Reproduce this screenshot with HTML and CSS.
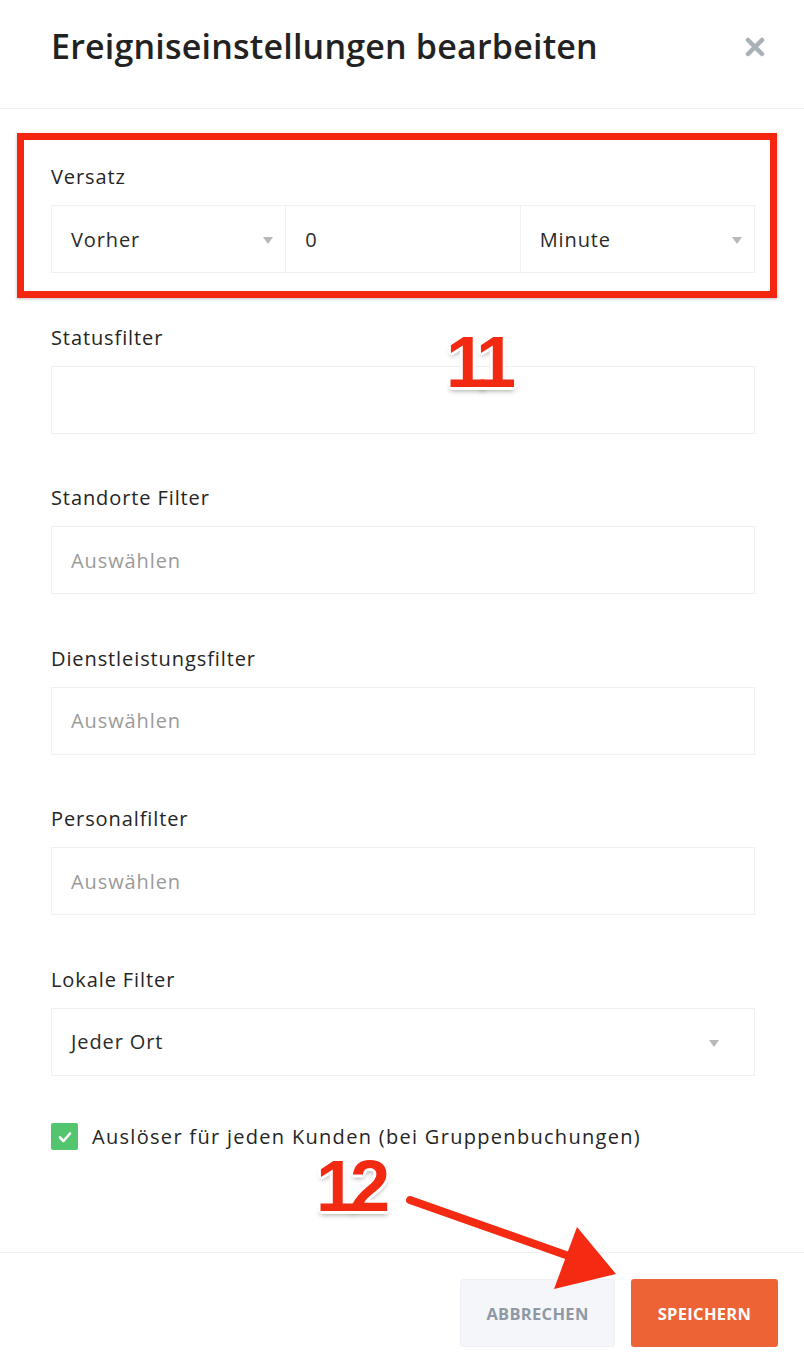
FILE: index.html
```
<!DOCTYPE html>
<html lang="de">
<head>
  <meta charset="UTF-8" />
  <meta name="viewport" content="width=device-width, initial-scale=1.0" />
  <title>Ereigniseinstellungen bearbeiten</title>
  <link rel="stylesheet" href="styles.css">
</head>
<body>
  <div class="modal">
    <div class="modal-header">
      <h1>Ereigniseinstellungen bearbeiten</h1>
      <span class="close">
        <svg width="24" height="24" viewBox="0 0 24 24"><path d="M5 5 L19 19 M19 5 L5 19" stroke="#a7b1b6" stroke-width="4.5" stroke-linecap="round"/></svg>
      </span>
    </div>

    <div class="modal-body">
      <div class="field">
        <label>Versatz</label>
        <div class="input-group">
          <div class="control select">Vorher<span class="caret"></span></div>
          <div class="control">0</div>
          <div class="control select">Minute<span class="caret"></span></div>
        </div>
      </div>

      <div class="field">
        <label>Statusfilter</label>
        <div class="control"></div>
      </div>

      <div class="field">
        <label>Standorte Filter</label>
        <div class="control placeholder">Auswählen</div>
      </div>

      <div class="field">
        <label>Dienstleistungsfilter</label>
        <div class="control placeholder">Auswählen</div>
      </div>

      <div class="field">
        <label>Personalfilter</label>
        <div class="control placeholder">Auswählen</div>
      </div>

      <div class="field">
        <label>Lokale Filter</label>
        <div class="control select wide">Jeder Ort<span class="caret"></span></div>
      </div>

      <div class="check-row">
        <span class="checkbox">
          <svg width="16" height="16" viewBox="0 0 16 16"><path d="M3 8.5 L6.5 12 L13 4.5" fill="none" stroke="#fff" stroke-width="2.6" stroke-linecap="round" stroke-linejoin="round"/></svg>
        </span>
        Auslöser für jeden Kunden (bei Gruppenbuchungen)
      </div>
    </div>

    <div class="modal-footer">
      <button class="btn btn-cancel">Abbrechen</button>
      <button class="btn btn-save">Speichern</button>
    </div>

    <!-- screenshot annotations -->
    <div class="mark-box"></div>
    <div class="mark-num num-11">11</div>
    <div class="mark-num num-12">12</div>
    <svg class="mark-arrow" width="804" height="1364" viewBox="0 0 804 1364">
      <line x1="410" y1="1200" x2="580" y2="1260" stroke="#f42a12" stroke-width="8" stroke-linecap="round"/>
      <polygon points="577,1227 616,1274 554,1289" fill="#f42a12"/>
    </svg>
  </div>
</body>
</html>
```
FILE: styles.css
```
body {
  margin: 0;
  background: #fff;
  font-family: "Open Sans", "Noto Sans", sans-serif;
  color: #252525;
}

.modal {
  position: relative;
  width: 804px;
  height: 1364px;
  overflow: hidden;
}

.modal-header {
  height: 109px;
  padding: 0 37px 0 51px;
  display: flex;
  align-items: center;
  justify-content: space-between;
  border-bottom: 1px solid #eef0f2;
  box-sizing: border-box;
}
.modal-header h1 {
  margin: 0 0 16px;
  font-size: 34px;
  font-weight: 600;
  color: #222;
  letter-spacing: 0.2px;
}
.close {
  display: flex;
  margin-bottom: 14px;
}

.modal-body {
  padding: 56px 49px 0 51px;
}

.field {
  display: flex;
  flex-direction: column;
  margin-bottom: 52.5px;
}
.field label {
  font-size: 20px;
  line-height: 24px;
  margin-bottom: 16px;
  letter-spacing: 0.9px;
  color: #252525;
}

.control {
  position: relative;
  height: 68px;
  box-sizing: border-box;
  border: 1px solid #eef0f2;
  padding: 0 19px;
  display: flex;
  align-items: center;
  font-size: 20px;
  letter-spacing: 0.9px;
  color: #2a2a2a;
}
.placeholder {
  color: #9a9a9a;
}

.input-group {
  display: flex;
}
.input-group .control {
  flex: 1;
}
.input-group .control + .control {
  border-left: none;
}

.caret {
  position: absolute;
  right: 12px;
  top: 31px;
  width: 0;
  height: 0;
  border-left: 5px solid transparent;
  border-right: 5px solid transparent;
  border-top: 7px solid #b8b8b8;
}
.wide .caret {
  right: 35px;
}

.check-row {
  display: flex;
  align-items: center;
  gap: 14px;
  margin-top: -5px;
  font-size: 20px;
  letter-spacing: 1.3px;
  color: #252525;
}
.checkbox {
  width: 27px;
  height: 27px;
  background: #52c56e;
  border-radius: 2px;
  display: flex;
  align-items: center;
  justify-content: center;
}

.modal-footer {
  position: absolute;
  left: 0;
  right: 0;
  top: 1252px;
  border-top: 1px solid #eef0f2;
  padding: 26px 26px 0 0;
  display: flex;
  justify-content: flex-end;
  gap: 16px;
}
.btn {
  height: 68px;
  border-radius: 3px;
  font-family: "Open Sans", sans-serif;
  font-weight: 700;
  font-size: 16.5px;
  letter-spacing: 0.3px;
  text-transform: uppercase;
  border: none;
}
.btn-cancel {
  width: 155px;
  background: #f4f6f9;
  color: #8e99a5;
  border: 1px solid #eef1f4;
}
.btn-save {
  width: 147px;
  background: #ee6335;
  color: #fff;
}

/* annotations drawn over the screenshot */
.mark-box {
  position: absolute;
  left: 17px;
  top: 133px;
  width: 760px;
  height: 165px;
  box-sizing: border-box;
  border: 7px solid #f5260f;
  box-shadow: 0 1px 3px rgba(0,0,0,0.25);
}
.mark-num {
  position: absolute;
  font-family: "Liberation Sans", Arial, sans-serif;
  font-weight: 700;
  font-size: 72px;
  line-height: 72px;
  color: #f22a12;
  letter-spacing: -6px;
  text-shadow:
    3px 0 0 #fff, -3px 0 0 #fff, 0 3px 0 #fff, 0 -3px 0 #fff,
    2px 2px 0 #fff, -2px 2px 0 #fff, 2px -2px 0 #fff, -2px -2px 0 #fff,
    0 4px 5px rgba(0,0,0,0.35);
}
.num-11 {
  left: 446px;
  top: 326px;
}
.num-12 {
  left: 316px;
  top: 1150px;
}
.mark-arrow {
  position: absolute;
  left: 0;
  top: 0;
  pointer-events: none;
}
```
